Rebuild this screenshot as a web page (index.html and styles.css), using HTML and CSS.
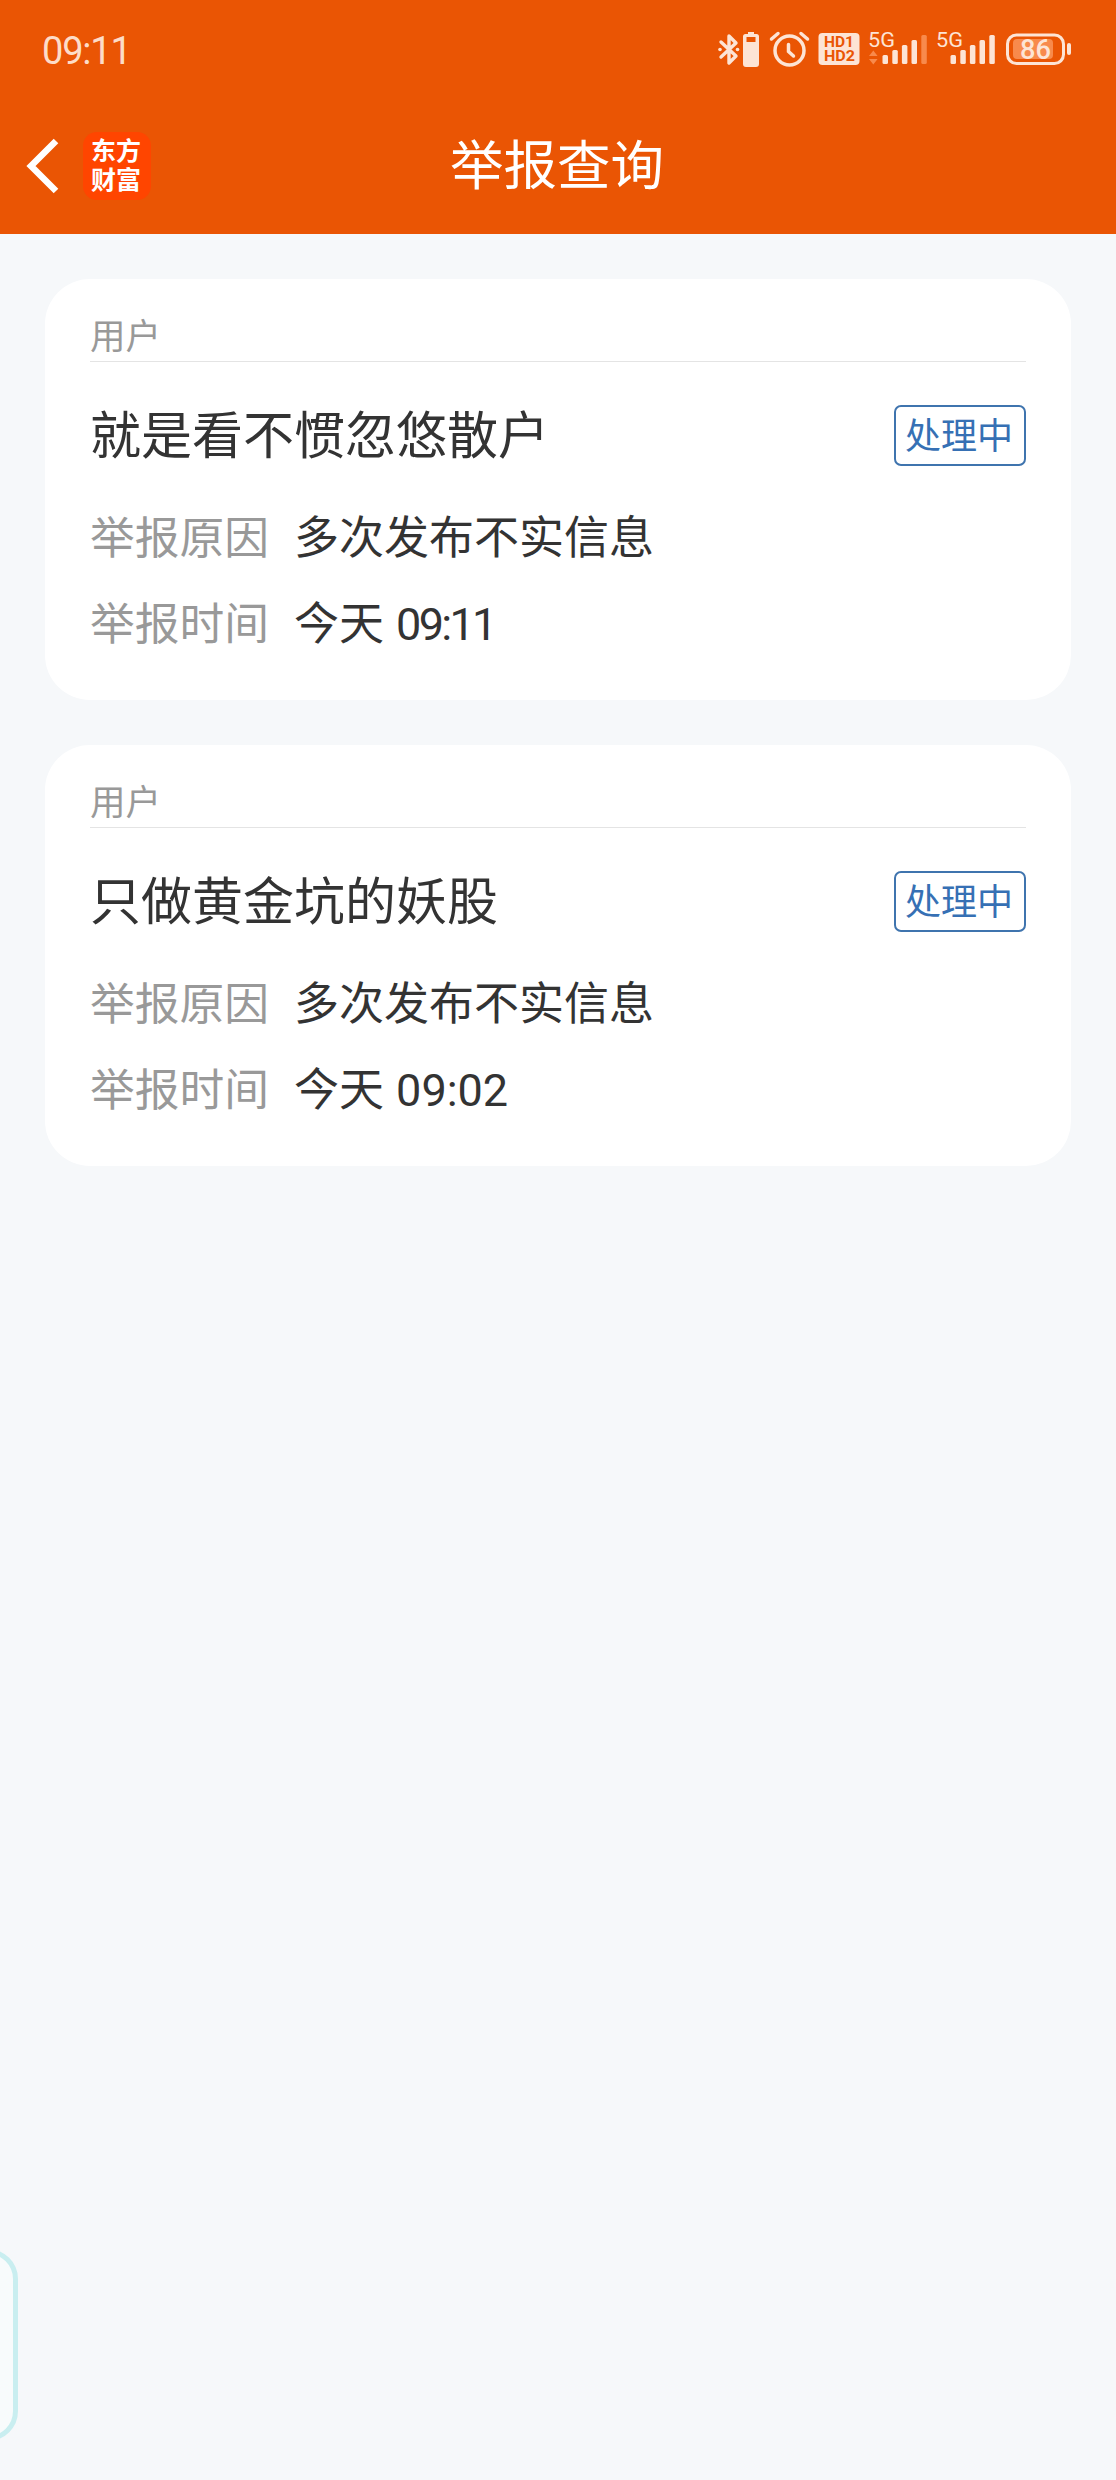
FILE: index.html
```html
<!DOCTYPE html>
<html lang="zh-CN">
<head>
  <meta charset="UTF-8">
  <title>举报查询</title>
  <link rel="stylesheet" href="styles.css">
</head>
<body>
  <header class="header">
    <div class="status-bar">
      <span class="clock">09:11</span>
      <div class="status-icons">
        <!-- 蓝牙 + 设备电量 -->
        <svg width="42" height="40" viewBox="718 30 42 40">
          <path d="M721 42l15 14-7 7V36l7 7-15 14" fill="none" stroke="#fde4d5" stroke-width="3.4" stroke-linecap="round" stroke-linejoin="round"/>
          <circle cx="720" cy="49.500" r="1.800"/><circle cx="737.500" cy="49.500" r="1.800"/>
          <path fill-rule="evenodd" d="M748 32h6v2h2.500a2.500 2.500 0 0 1 2.500 2.500V64a3 3 0 0 1-3 3h-10a3 3 0 0 1-3-3V36.500a2.500 2.500 0 0 1 2.500-2.500h2.500zM746.500 37v5h9v-5z"/>
        </svg>
        <!-- 闹钟 -->
        <svg class="alarm" width="42" height="40" viewBox="769 30 42 40">
          <g fill="none" stroke="#fde4d5" stroke-width="3.500" stroke-linecap="round">
            <circle cx="789.500" cy="50.500" r="14.500"/>
            <path d="M788.500 44.500v7l5 4.500M771.500 39l6.500-5.500M807.500 39l-6.500-5.500"/>
          </g>
        </svg>
        <svg class="hd" width="42" height="40" viewBox="818 30 42 40">
          <rect x="818.500" y="33" width="41" height="32" rx="4"/>
          <text class="hd-text" x="824" y="47" textLength="30" lengthAdjust="spacingAndGlyphs">HD1</text>
          <text class="hd-text" x="824" y="61" textLength="31" lengthAdjust="spacingAndGlyphs">HD2</text>
        </svg>
        <svg class="signal" width="60" height="40" viewBox="868 30 60 40">
          <text class="net" x="868" y="46.500" textLength="27" lengthAdjust="spacingAndGlyphs">5G</text>
          <path class="dim" d="M869 56l4.300-5.500 4.300 5.500zM869 59l4.300 5.500 4.300-5.500z"/>
          <rect x="882.500" y="55" width="5.500" height="9" rx="1.500"/>
          <rect x="892.300" y="50" width="5.500" height="14" rx="1.500"/>
          <rect x="901.900" y="45" width="5.500" height="19" rx="1.500"/>
          <rect x="911.500" y="40" width="5.500" height="24" rx="1.500"/>
          <rect class="dim" x="921.300" y="35" width="5.500" height="29" rx="1.500"/>
        </svg>
        <svg class="signal" width="60" height="40" viewBox="936 30 60 40">
          <text class="net" x="936" y="46.500" textLength="27" lengthAdjust="spacingAndGlyphs">5G</text>
          <rect x="950.500" y="55" width="5.500" height="9" rx="1.500"/>
          <rect x="960.300" y="50" width="5.500" height="14" rx="1.500"/>
          <rect x="969.900" y="45" width="5.500" height="19" rx="1.500"/>
          <rect x="979.500" y="40" width="5.500" height="24" rx="1.500"/>
          <rect x="989.300" y="35" width="5.500" height="29" rx="1.500"/>
        </svg>
        <!-- 手机电量 -->
        <svg class="battery" width="66" height="40" viewBox="1006 30 66 40">
          <rect x="1007.500" y="35" width="56" height="28.500" rx="9" fill="none" stroke="#fde4d5" stroke-width="3"/>
          <rect class="dim" x="1013" y="39" width="40" height="20" rx="4"/>
          <rect x="1067" y="43" width="4" height="12" rx="2"/>
          <text class="level" x="1020" y="58.500" textLength="31" lengthAdjust="spacingAndGlyphs">86</text>
        </svg>
      </div>
    </div>
    <div class="nav-bar">
      <div class="nav-left">
        <svg class="back" width="34" height="56" viewBox="0 0 34 56">
          <path d="M31 3L6 28l25 25" fill="none" stroke="#fff" stroke-width="6.500"/>
        </svg>
        <div class="logo"><span>东方</span><span>财富</span></div>
      </div>
      <h1 class="nav-title">举报查询</h1>
    </div>
  </header>

  <main class="list">
    <section class="card">
      <div class="card-type">用户</div>
      <div class="card-head">
        <h2 class="card-name">就是看不惯忽悠散户</h2>
        <span class="badge">处理中</span>
      </div>
      <div class="row"><span class="label">举报原因</span><span class="value">多次发布不实信息</span></div>
      <div class="row"><span class="label">举报时间</span><span class="value">今天 <span class="time narrow">09:11</span></span></div>
    </section>

    <section class="card">
      <div class="card-type">用户</div>
      <div class="card-head">
        <h2 class="card-name">只做黄金坑的妖股</h2>
        <span class="badge">处理中</span>
      </div>
      <div class="row"><span class="label">举报原因</span><span class="value">多次发布不实信息</span></div>
      <div class="row"><span class="label">举报时间</span><span class="value">今天 <span class="time">09:02</span></span></div>
    </section>
  </main>

  <div class="side-handle"></div>
</body>
</html>
```
FILE: styles.css
```css
* {
  box-sizing: border-box;
}
body {
  position: relative;
  margin: 0;
  height: 2480px;
  overflow: hidden;
  background: #f6f8fa;
  color: #333;
  font-family: "Noto Sans CJK SC", sans-serif;
}
h1, h2 {
  margin: 0;
  font-weight: 400;
}
.header {
  height: 234px;
  background: #ea5504;
}
.status-bar {
  display: flex;
  justify-content: space-between;
  height: 98px;
  padding: 0 44px 0 42px;
}
.clock {
  color: #fddcc8;
  font-family: Roboto, sans-serif;
  font-size: 38px;
  line-height: 103px;
  letter-spacing: -1.2px;
}
.status-icons {
  display: flex;
  padding-top: 30px;
}
.status-icons svg {
  fill: #fde4d5;
  overflow: visible;
}
.status-icons .alarm { margin-left: 9px; }
.status-icons .hd { margin-left: 7px; }
.status-icons .signal { margin-left: 8px; }
.status-icons .battery { margin-left: 10px; }
.status-icons .dim { fill: #f88a4c; }
.hd-text {
  fill: #ea5504;
  font: 700 14px Roboto, sans-serif;
}
.net {
  font: 400 20px Roboto, sans-serif;
}
.level {
  font: 500 27px Roboto, sans-serif;
}
.nav-bar {
  display: grid;
  grid-template-columns: 1fr auto 1fr;
  height: 136px;
}
.nav-left {
  display: flex;
  align-items: center;
  padding-left: 25px;
}
.logo {
  display: flex;
  flex-direction: column;
  width: 68px;
  height: 68px;
  margin-left: 24px;
  padding: 3px 0 0 8px;
  border-radius: 14px;
  background: #ff4500;
  color: #fff;
  font-size: 25px;
  font-weight: 700;
  line-height: 29px;
}
.nav-title {
  margin-right: 2px;
  color: #fff;
  font-size: 53.5px;
  line-height: 127px;
}
.list {
  display: flex;
  flex-direction: column;
  gap: 45px;
  padding: 45px;
}
.card {
  height: 421px;
  padding: 0 45px;
  border-radius: 45px;
  background: #fff;
}
.card-type {
  height: 83px;
  padding-top: 30px;
  border-bottom: 1px solid #e4e4e4;
  color: #999;
  font-size: 35.5px;
  line-height: 50px;
}
.card-head {
  display: flex;
  align-items: center;
  justify-content: space-between;
  height: 131px;
  padding-top: 15px;
}
.card-name {
  font-size: 51px;
  line-height: 70px;
  margin-top: -7px;
}
.badge {
  width: 132px;
  height: 61px;
  border: 2px solid #3f74ae;
  border-radius: 7px;
  padding-right: 2px;
  color: #3670b4;
  font-size: 36px;
  line-height: 53px;
  text-align: center;
}
.row {
  display: flex;
  gap: 25px;
  height: 86px;
  font-size: 45px;
  line-height: 83px;
}
.label {
  color: #999;
  font-size: 44.75px;
}
.time {
  margin-left: 2px;
  font-family: Roboto, sans-serif;
}
.time.narrow {
  letter-spacing: -2.7px;
}
/* 左侧悬浮把手，大半在屏幕外 */
.side-handle {
  position: absolute;
  left: -60px;
  top: 2249px;
  width: 78px;
  height: 192px;
  border: 5px solid #c9eef0;
  border-radius: 30px;
  background: #f8fbfc;
}
```
